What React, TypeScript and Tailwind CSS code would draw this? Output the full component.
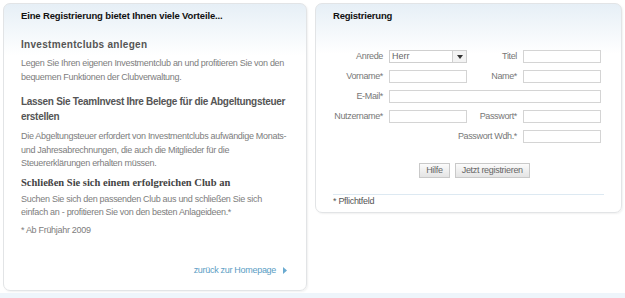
const benefits = [
  {
    title: "Investmentclubs anlegen",
    text: "Legen Sie Ihren eigenen Investmentclub an und profitieren Sie von den bequemen Funktionen der Clubverwaltung.",
    titleClass: "mt-[14px] text-[10px] font-bold leading-[15px] tracking-[0.3px] text-[#555]",
    textClass: "mt-[5px]",
  },
  {
    title: "Lassen Sie TeamInvest Ihre Belege für die Abgeltungsteuer erstellen",
    text: "Die Abgeltungsteuer erfordert von Investmentclubs aufwändige Monats- und Jahresabrechnungen, die auch die Mitglieder für die Steuererklärungen erhalten müssen.",
    titleClass: "mt-[10px] text-[10px] font-bold leading-[15px] tracking-[-0.3px] text-[#555]",
    textClass: "mt-[6px]",
  },
  {
    title: "Schließen Sie sich einem erfolgreichen Club an",
    text: "Suchen Sie sich den passenden Club aus und schließen Sie sich einfach an - profitieren Sie von den besten Anlageideen.*",
    titleClass: "mt-[4px] font-['Liberation_Serif',serif] text-[10.5px] font-bold leading-[15px] text-[#444]",
    textClass: "mt-[3px]",
  },
];

const small = "text-[9px] tracking-[-0.3px] text-[#7d7d7d]";

function Field({ className = "w-[78px]" }: { className?: string }) {
  return <div className={`h-[13px] border border-[#d4d4d4] bg-white ${className}`} />;
}

function Label({ children, className = "w-[50px]" }: { children: React.ReactNode; className?: string }) {
  return (
    <span className={`mr-[6px] whitespace-nowrap text-right text-[9px] leading-[13px] tracking-[-0.35px] text-[#777] ${className}`}>
      {children}
    </span>
  );
}

function Button({ children }: { children: React.ReactNode }) {
  return (
    <button className="h-[15px] border border-[#c9c9c9] bg-gradient-to-b from-[#fbfbfb] to-[#e4e4e4] px-[6px] text-[9px] leading-[13px] tracking-[-0.3px] text-[#666]">
      {children}
    </button>
  );
}

export default function App() {
  return (
    <div className="flex h-[298px] w-[625px] flex-col bg-white font-['Liberation_Sans',Arial,sans-serif]">
      <div className="flex flex-1 gap-[8px] px-[3px] pt-[3px]">
        {/* left panel */}
        <div className="flex h-[288px] w-[304px] flex-col rounded-[7px] border border-[#e2e4e6] bg-gradient-to-b from-[#e6eff6] via-white via-[18%] to-white px-[17px] pb-[13px] shadow-[1px_1px_2px_rgba(0,0,0,0.06)]">
          <h1 className="mt-[5px] text-[9.5px] font-bold leading-[14px] tracking-[-0.15px] text-[#111]">
            Eine Registrierung bietet Ihnen viele Vorteile...
          </h1>
          {benefits.map((b) => (
            <div key={b.title}>
              <h2 className={b.titleClass}>{b.title}</h2>
              <p className={`${b.textClass} leading-[13.5px] ${small}`}>{b.text}</p>
            </div>
          ))}
          <p className={`mt-[4px] leading-[13.5px] ${small}`}>* Ab Frühjahr 2009</p>
          <div className="mt-auto flex items-center justify-end gap-[7px] pr-[2px] text-[9px] leading-[13px] tracking-[-0.3px] text-[#5a9dc4]">
            <span>zurück zur Homepage</span>
            <svg width="4" height="7" viewBox="0 0 4 7">
              <path d="M0 0 L4 3.5 L0 7 Z" fill="#6aaad0" />
            </svg>
          </div>
        </div>

        {/* right panel */}
        <div className="flex h-[210px] w-[307px] flex-col rounded-[7px] border border-[#e2e4e6] bg-gradient-to-b from-[#e6eff6] via-white via-[24%] to-white px-[17px] shadow-[1px_1px_2px_rgba(0,0,0,0.06)]">
          <h1 className="mt-[5px] text-[9.5px] font-bold leading-[14px] tracking-[-0.2px] text-[#111]">Registrierung</h1>
          <div className="mt-[27px] flex flex-col gap-[7px]">
            <div className="flex items-center">
              <Label>Anrede</Label>
              <div className="flex h-[13px] w-[78px] items-center border border-[#cfcfcf] bg-white">
                <span className="flex-1 pl-[2px] text-[9px] leading-[11px] text-[#666]">Herr</span>
                <div className="flex h-full w-[14px] items-center justify-center border-l border-[#cfcfcf] bg-[#f3f3f3]">
                  <svg width="6" height="4" viewBox="0 0 6 4">
                    <path d="M0 0 L6 0 L3 4 Z" fill="#333" />
                  </svg>
                </div>
              </div>
              <Label>Titel</Label>
              <Field />
            </div>
            <div className="flex items-center">
              <Label>Vorname*</Label>
              <Field />
              <Label>Name*</Label>
              <Field />
            </div>
            <div className="flex items-center">
              <Label>E-Mail*</Label>
              <Field className="w-[212px]" />
            </div>
            <div className="flex items-center">
              <Label>Nutzername*</Label>
              <Field />
              <Label>Passwort*</Label>
              <Field />
            </div>
            <div className="flex items-center">
              <Label className="w-[184px]">Passwort Wdh.*</Label>
              <Field />
            </div>
          </div>
          <div className="mt-[20px] flex justify-center gap-[5px] pl-[12px]">
            <Button>Hilfe</Button>
            <Button>Jetzt registrieren</Button>
          </div>
          <div className="mt-[16px] border-t border-[#dde9f2]" />
          <p className="mt-[0px] text-[9px] leading-[12px] tracking-[-0.3px] text-[#555]">* Pflichtfeld</p>
        </div>
      </div>
      <div className="h-[5px] bg-[#eef5fb]" />
    </div>
  );
}
